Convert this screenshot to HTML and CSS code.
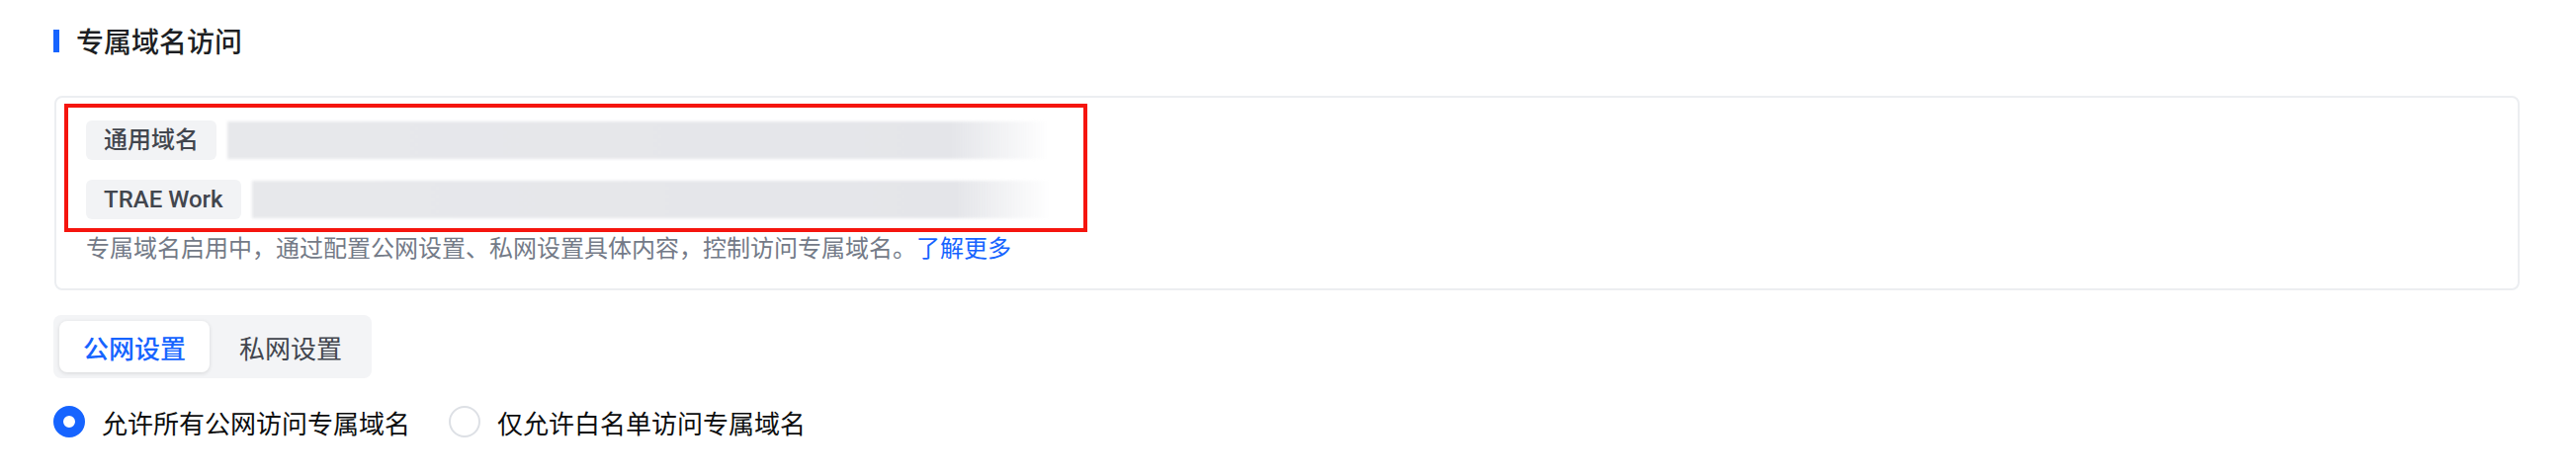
FILE: index.html
```html
<!DOCTYPE html>
<html lang="zh-CN">
<head>
    <meta charset="UTF-8">
    <title>专属域名访问</title>
    <meta name="viewport" content="width=device-width, initial-scale=1">
    <link rel="stylesheet" href="styles.css">
</head>
<body>
    <main class="page">
        <h2 class="section-title">专属域名访问</h2>

        <section class="domain-card">
            <div class="domain-row">
                <span class="domain-tag">通用域名</span>
                <span class="domain-value domain-value-wide"></span>
            </div>
            <div class="domain-row">
                <span class="domain-tag">TRAE Work</span>
                <span class="domain-value"></span>
            </div>
            <p class="domain-hint">专属域名启用中，通过配置公网设置、私网设置具体内容，控制访问专属域名。<a href="#" class="link">了解更多</a></p>
            <div class="highlight-box"></div>
        </section>

        <div class="segmented">
            <button class="segment segment-active">公网设置</button>
            <button class="segment">私网设置</button>
        </div>

        <div class="radio-group">
            <label class="radio">
                <span class="radio-dot radio-dot-checked"></span>
                <span>允许所有公网访问专属域名</span>
            </label>
            <label class="radio">
                <span class="radio-dot"></span>
                <span>仅允许白名单访问专属域名</span>
            </label>
        </div>
    </main>
</body>
</html>
```

FILE: styles.css
```css
:root {
    --blue: #1664ff;
    --text: #0c0d0e;
    --text-2: #42464e;
    --muted: #737a87;
    --fill: #f2f3f5;
    --line: #eceef1;
}
body {
    margin: 0;
    background: #fff;
    color: var(--text);
    font-family: Roboto, "Noto Sans CJK SC", sans-serif;
}
.page {
    padding: 21px 57px 0 54px;
}
.section-title {
    display: flex;
    align-items: center;
    gap: 17px;
    margin: 0;
    height: 40px;
    font-size: 28px;
    font-weight: 500;
    color: #1d1f23;
}
.section-title::before {
    content: "";
    width: 6px;
    height: 23px;
    background: var(--blue);
}
.domain-card {
    position: relative;
    margin: 36px 0 0 1px;
    padding: 23px 30px 22px;
    border: 2px solid var(--line);
    border-radius: 8px;
}
.domain-row {
    display: flex;
    align-items: center;
    gap: 11px;
    height: 40px;
}
.domain-row + .domain-row {
    margin-top: 20px;
}
.domain-tag {
    padding: 0 18px;
    line-height: 40px;
    font-size: 24px;
    font-weight: 500;
    color: var(--text-2);
    background: var(--fill);
    border-radius: 6px;
    white-space: nowrap;
}
/* masked value, faded out at the end */
.domain-value {
    width: 808px;
    height: 38px;
    background: linear-gradient(to right, #e7e8eb 0, #e4e5e9 88%, rgba(230, 231, 235, 0) 100%);
    filter: blur(1.5px);
}
.domain-value-wide {
    width: 832px;
}
.domain-hint {
    margin: 12px 0 0;
    font-size: 24px;
    line-height: 36px;
    color: var(--muted);
}
.link {
    color: var(--blue);
    text-decoration: none;
}
.highlight-box {
    position: absolute;
    left: 8px;
    top: 6px;
    width: 1027px;
    height: 122px;
    border: 4px solid #f5150e;
}
.segmented {
    display: inline-flex;
    gap: 6px;
    margin-top: 25px;
    padding: 6px;
    background: #f3f4f6;
    border-radius: 8px;
}
.segment {
    height: 52px;
    padding: 0 24px;
    border: none;
    border-radius: 8px;
    background: none;
    font-family: inherit;
    font-size: 26px;
    color: var(--text-2);
    cursor: pointer;
}
.segment-active {
    background: #fff;
    color: var(--blue);
    font-weight: 500;
    box-shadow: 0 1px 4px rgba(0, 0, 0, 0.12);
}
.radio-group {
    display: flex;
    gap: 39px;
    margin-top: 24px;
}
.radio {
    display: flex;
    align-items: center;
    gap: 17px;
    height: 40px;
    font-size: 26px;
    color: var(--text);
}
.radio-dot {
    box-sizing: border-box;
    width: 32px;
    height: 32px;
    border: 2px solid #dde0e5;
    border-radius: 50%;
    background: #fff;
}
.radio-dot-checked {
    border: 10px solid var(--blue);
}
```
